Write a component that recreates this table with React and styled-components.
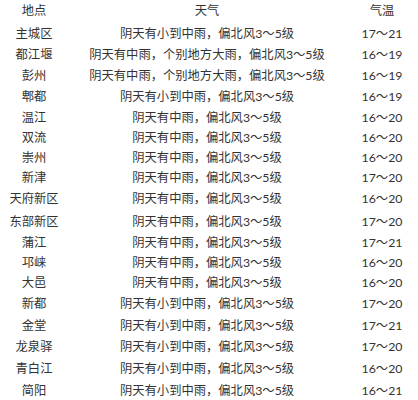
import React from 'react';
import styled, { createGlobalStyle } from 'styled-components';

const GlobalStyle = createGlobalStyle`
  html, body {
    margin: 0;
    padding: 0;
    background: #ffffff;
  }
  body {
    font-family: "Lato", "Noto Sans CJK SC", sans-serif;
    color: #333;
  }
`;

const Table = styled.div`
  width: 418px;
  display: flex;
  flex-direction: column;
  background: #ffffff;
`;

const Row = styled.div`
  display: grid;
  grid-template-columns: 68px 278px 72px;
  height: ${({ $h }) => $h}px;
  align-items: center;
`;

const Cell = styled.div`
  text-align: center;
  font-size: 12.3px;
  line-height: 1;
  white-space: nowrap;
  color: #333;
`;

const rows = [
  ['主城区', '阴天有小到中雨，偏北风3～5级', '17～21', 22],
  ['都江堰', '阴天有中雨，个别地方大雨，偏北风3～5级', '16～19', 21],
  ['彭州', '阴天有中雨，个别地方大雨，偏北风3～5级', '16～19', 21],
  ['郫都', '阴天有小到中雨，偏北风3～5级', '16～19', 21],
  ['温江', '阴天有中雨，偏北风3～5级', '16～20', 20],
  ['双流', '阴天有中雨，偏北风3～5级', '16～20', 20],
  ['崇州', '阴天有中雨，偏北风3～5级', '16～20', 20],
  ['新津', '阴天有中雨，偏北风3～5级', '17～20', 20],
  ['天府新区', '阴天有中雨，偏北风3～5级', '16～20', 23],
  ['东部新区', '阴天有中雨，偏北风3～5级', '17～20', 23],
  ['蒲江', '阴天有中雨，偏北风3～5级', '17～21', 19],
  ['邛崃', '阴天有中雨，偏北风3～5级', '16～20', 20],
  ['大邑', '阴天有中雨，偏北风3～5级', '16～20', 21],
  ['新都', '阴天有小到中雨，偏北风3～5级', '17～20', 21],
  ['金堂', '阴天有小到中雨，偏北风3～5级', '17～21', 22],
  ['龙泉驿', '阴天有小到中雨，偏北风3～5级', '17～20', 21],
  ['青白江', '阴天有小到中雨，偏北风3～5级', '16～20', 22],
  ['简阳', '阴天有小到中雨，偏北风3～5级', '16～21', 22],
];

export default function App() {
  return (
    <>
      <GlobalStyle />
      <Table>
        <Row $h={23}>
          <Cell>地点</Cell>
          <Cell>天气</Cell>
          <Cell>气温</Cell>
        </Row>
        {rows.map(([place, weather, temp, h]) => (
          <Row key={place} $h={h}>
            <Cell>{place}</Cell>
            <Cell>{weather}</Cell>
            <Cell>{temp}</Cell>
          </Row>
        ))}
      </Table>
    </>
  );
}
